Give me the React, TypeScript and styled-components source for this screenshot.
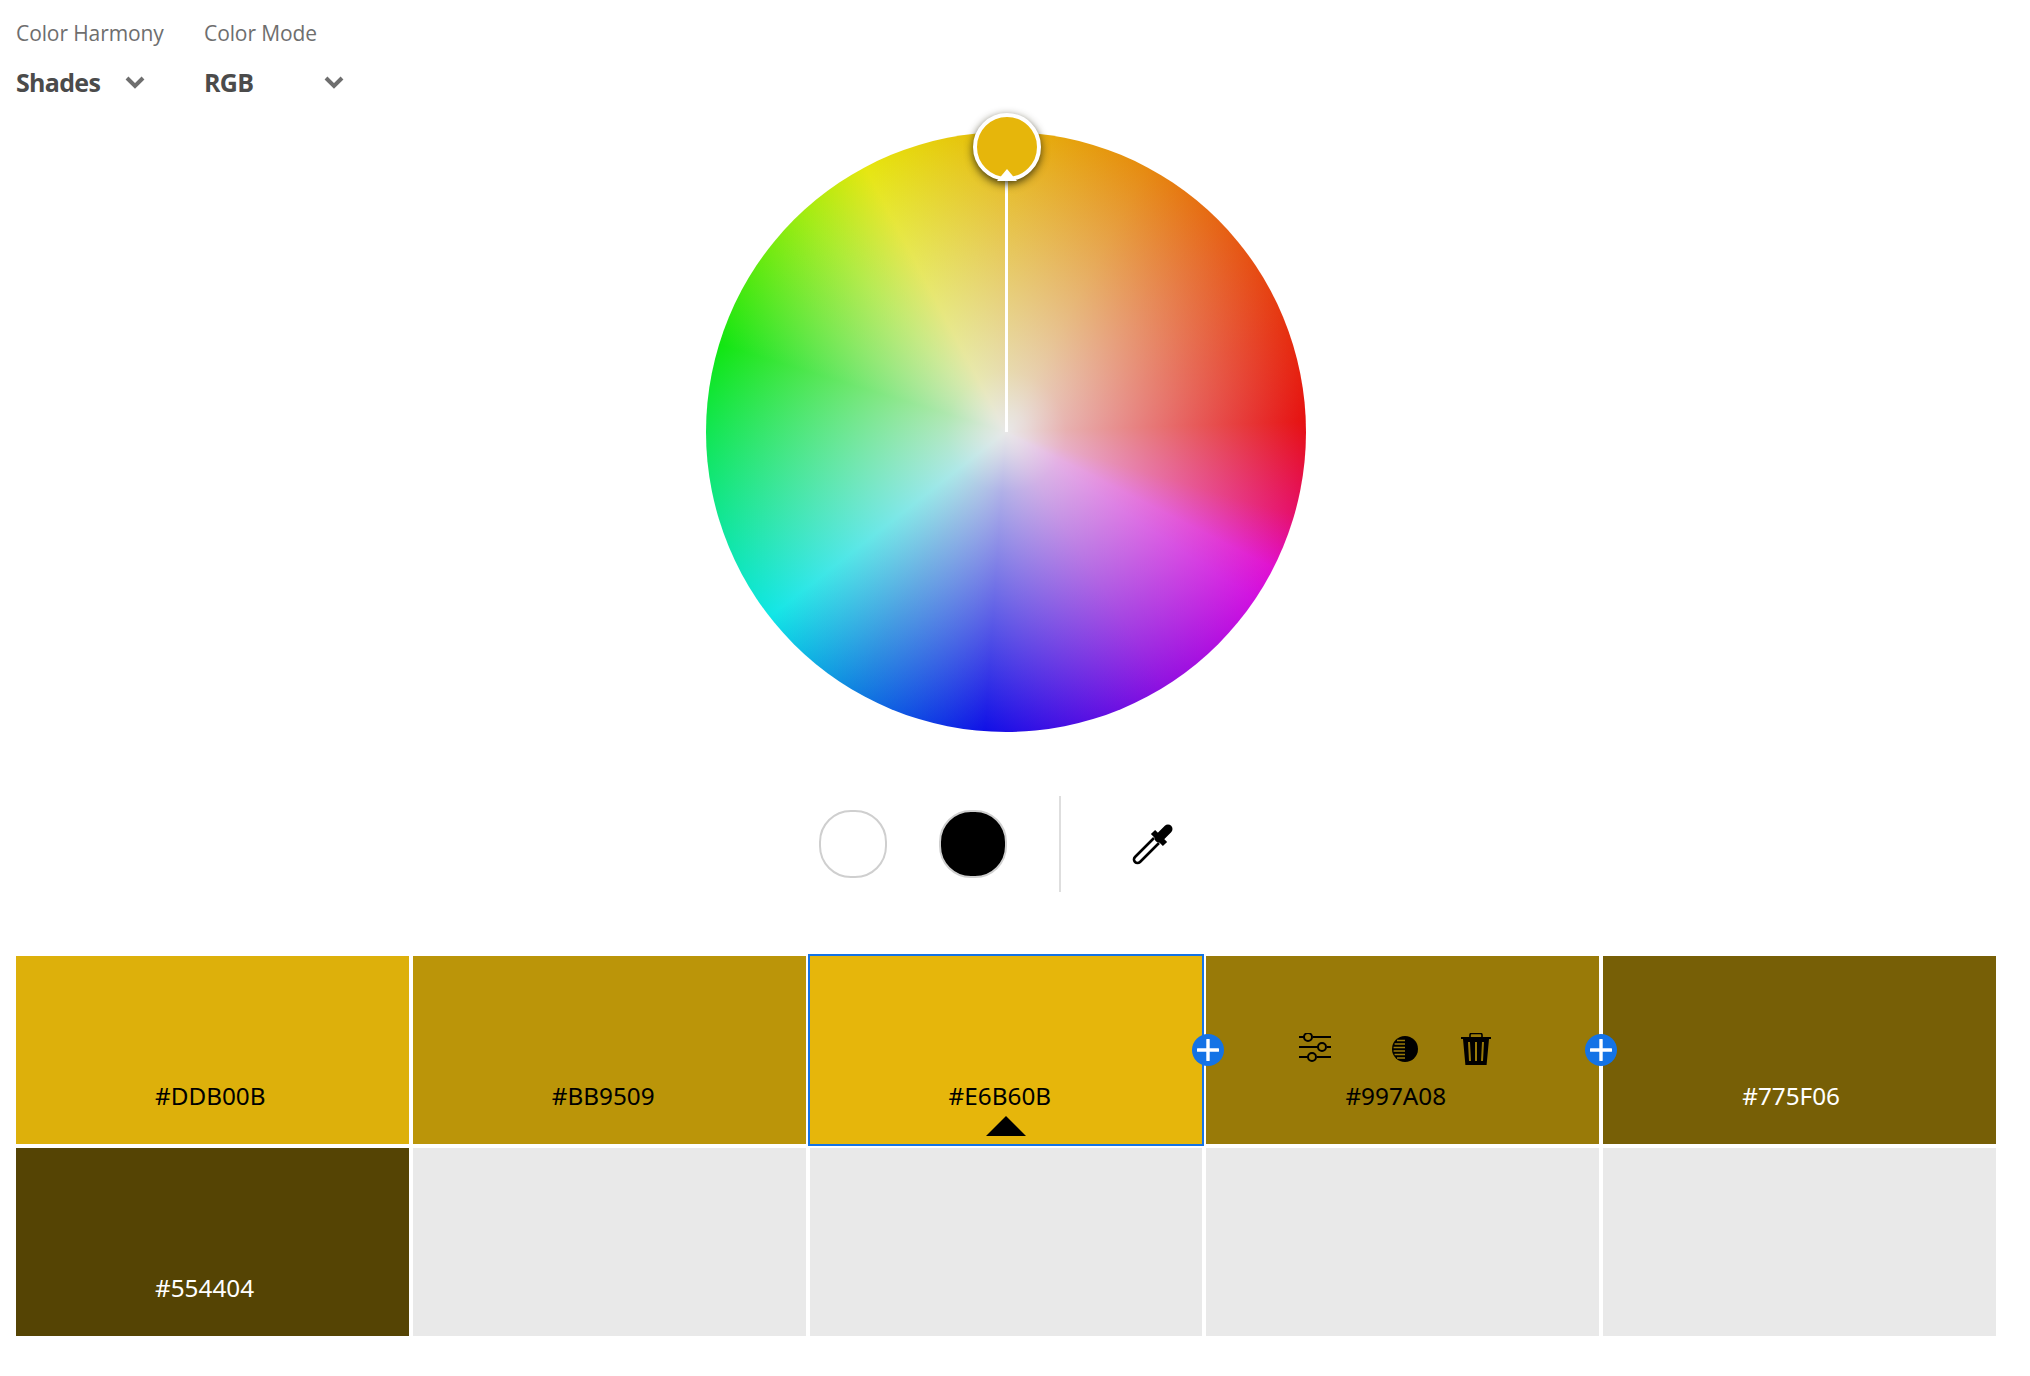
import React from 'react'
import styled, { createGlobalStyle } from 'styled-components'

const GlobalStyle = createGlobalStyle`
  html, body {
    margin: 0;
    padding: 0;
    background: #fff;
    font-family: "Open Sans", "Noto Sans", sans-serif;
  }
`

const Page = styled.div`
  width: 2030px;
  height: 1376px;
  box-sizing: border-box;
  padding: 0 34px 0 16px;
  overflow: hidden;
`

const Header = styled.div`
  display: flex;
  gap: 39px;
  height: 132px;
  padding-top: 18px;
  box-sizing: border-box;
`

const Field = styled.div<{ $width: number }>`
  width: ${({ $width }) => $width}px;
`

const FieldLabel = styled.div`
  font-size: 21px;
  line-height: 30px;
  color: #6e6e6e;
  letter-spacing: -0.1px;
`

const FieldValue = styled.div<{ $width: number }>`
  display: flex;
  justify-content: space-between;
  align-items: center;
  width: ${({ $width }) => $width}px;
  margin-top: 19px;
  font-size: 25px;
  line-height: 30px;
  font-weight: 700;
  color: #4b4b4b;
  letter-spacing: -0.7px;
`

const Chevron = styled.svg`
  width: 20px;
  height: 14px;
  fill: none;
  stroke: #6e6e6e;
  stroke-width: 4;
`

const WheelArea = styled.div`
  display: flex;
  justify-content: center;
`

const Wheel = styled.div`
  position: relative;
  width: 600px;
  height: 600px;
  border-radius: 50%;
  background:
    radial-gradient(circle closest-side, rgba(232, 232, 232, 1) 0%, rgba(232, 232, 232, 0.92) 7%, rgba(232, 232, 232, 0.74) 20%, rgba(232, 232, 232, 0.42) 55%, rgba(232, 232, 232, 0) 100%),
    conic-gradient(
      #e6b60b 0deg,
      #e68a10 28deg,
      #e65c14 49deg,
      #e63010 70deg,
      #e61010 88deg,
      #e6106a 106deg,
      #e010d0 117deg,
      #d010e0 124deg,
      #9010e0 148deg,
      #1010e6 184deg,
      #1080e0 210deg,
      #10e6e6 232deg,
      #10e690 254deg,
      #10e610 287deg,
      #a0ec10 317deg,
      #e6e610 332deg,
      #e6b60b 360deg
    );
`

const Needle = styled.div`
  position: absolute;
  left: 299px;
  top: 36px;
  width: 3px;
  height: 264px;
  background: #fff;
`

const Handle = styled.div`
  position: absolute;
  left: 267px;
  top: -19px;
  width: 68px;
  height: 68px;
  box-sizing: border-box;
  border: 4px solid #fff;
  border-radius: 50%;
  background: #e6b60b;
  box-shadow: 0 3px 9px rgba(40, 36, 10, 0.85);
`

const HandleNotch = styled.div`
  position: absolute;
  left: 20px;
  bottom: -4px;
  width: 0;
  height: 0;
  border-left: 10px solid transparent;
  border-right: 10px solid transparent;
  border-bottom: 12px solid #fff;
`

const Tools = styled.div`
  display: flex;
  align-items: center;
  justify-content: center;
  height: 96px;
  margin-top: 64px;
`

const Swatch = styled.div<{ $color: string }>`
  width: 68px;
  height: 68px;
  box-sizing: border-box;
  border: 2px solid #cfcfcf;
  border-radius: 47%;
  background: ${({ $color }) => $color};
`

const SwatchGap = styled.div`
  width: 52px;
`

const Divider = styled.div`
  width: 2px;
  height: 96px;
  margin-left: 52px;
  background: #dedede;
`

const PickerButton = styled.div`
  display: flex;
  align-items: center;
  justify-content: center;
  width: 82px;
  height: 96px;
  margin-left: 51px;
`

const Grid = styled.div`
  display: grid;
  grid-template-columns: repeat(5, 1fr);
  grid-auto-rows: 188px;
  gap: 4px;
  margin-top: 64px;
`

const Cell = styled.div<{ $color: string; $light?: boolean; $active?: boolean }>`
  position: relative;
  display: flex;
  align-items: flex-end;
  box-sizing: border-box;
  padding: 0 0 32px 139px;
  background: ${({ $color }) => $color};
  color: ${({ $light }) => ($light ? '#fff' : '#000')};
  ${({ $active }) => $active && 'outline: 2px solid #1473e6; z-index: 1;'}
`

const Hex = styled.span`
  font-family: "Noto Sans", "Open Sans", sans-serif;
  font-size: 24.3px;
  line-height: 32px;
`

const Marker = styled.div`
  position: absolute;
  left: 176px;
  bottom: 8px;
  width: 0;
  height: 0;
  border-left: 20px solid transparent;
  border-right: 20px solid transparent;
  border-bottom: 20px solid #000;
`

const CellTools = styled.div`
  position: absolute;
  left: 93px;
  top: 77px;
  display: flex;
  align-items: center;
`

const IconSlot = styled.span<{ $offset?: number }>`
  display: flex;
  justify-content: center;
  align-items: center;
  height: 32px;
  margin-left: ${({ $offset }) => $offset ?? 0}px;
`

const AddButton = styled.div<{ $side: 'left' | 'right' }>`
  position: absolute;
  top: 78px;
  ${({ $side }) => ($side === 'left' ? 'left: -14px;' : 'right: -18px;')}
  width: 32px;
  height: 32px;
  border-radius: 50%;
  background: #1473e6;
  z-index: 2;
  display: flex;
  align-items: center;
  justify-content: center;
`

const swatches = [
  { color: '#DDB00B', hex: '#DDB00B' },
  { color: '#BB9509', hex: '#BB9509' },
  { color: '#E6B60B', hex: '#E6B60B', active: true },
  { color: '#997A08', hex: '#997A08', tools: true },
  { color: '#775F06', hex: '#775F06', light: true },
  { color: '#554404', hex: '#554404', light: true },
  { color: '#E9E9E9' },
  { color: '#E9E9E9' },
  { color: '#E9E9E9' },
  { color: '#E9E9E9' },
]

const ChevronIcon = () => (
  <Chevron viewBox="0 0 20 14">
    <path d="M2 3l8 8 8-8" />
  </Chevron>
)

const PlusIcon = () => (
  <svg width="22" height="22" viewBox="0 0 22 22">
    <path d="M11 1v20M1 11h20" stroke="#fff" strokeWidth="3.4" strokeLinecap="round" />
  </svg>
)

const Eyedropper = () => (
  <svg width="42" height="42" viewBox="0 0 42 42" fill="none" stroke="#000">
    <path d="M22 15L3 34a3.4 3.4 0 0 0 5 5L27 20" strokeWidth="2.6" />
    <path d="M21 9L33 21" strokeWidth="6" />
    <path d="M27 15L36 6" strokeWidth="9" strokeLinecap="round" />
  </svg>
)

const SlidersIcon = () => (
  <svg width="32" height="32" viewBox="0 0 32 32" fill="none" stroke="#000" strokeWidth="2">
    <path d="M0 4h5M14 4h18M0 14h19M28 14h4M0 24h9M18 24h14" />
    <circle cx="9" cy="4" r="4" />
    <circle cx="23" cy="14" r="4" />
    <circle cx="13" cy="24" r="4" />
  </svg>
)

const ContrastIcon = () => (
  <svg width="26" height="26" viewBox="0 0 26 26">
    <circle cx="13" cy="13" r="13" fill="#000" />
    <path d="M5 4.5h8M2.6 8h10.4M1.6 11.5h11.4M1.6 15h11.4M2.6 18.5h10.4M5 22h8" stroke="#997A08" strokeWidth="1.6" />
  </svg>
)

const TrashIcon = () => (
  <svg width="30" height="32" viewBox="0 0 30 32">
    <path d="M9 4V2a1.5 1.5 0 0 1 1.5-1.5h9A1.5 1.5 0 0 1 21 2v2" fill="none" stroke="#000" strokeWidth="1.6" />
    <path d="M0 4h30v2h-2l-2.4 26H4.4L2 6H0z" fill="#000" />
    <path d="M8 9l1 19M15 9v19M22 9l-1 19" stroke="#997A08" strokeWidth="2" />
  </svg>
)

export default function App() {
  return (
    <Page>
      <GlobalStyle />
      <Header>
        <Field $width={149}>
          <FieldLabel>Color Harmony</FieldLabel>
          <FieldValue $width={129}>
            Shades
            <ChevronIcon />
          </FieldValue>
        </Field>
        <Field $width={140}>
          <FieldLabel>Color Mode</FieldLabel>
          <FieldValue $width={140}>
            RGB
            <ChevronIcon />
          </FieldValue>
        </Field>
      </Header>
      <WheelArea>
        <Wheel>
          <Needle />
          <Handle>
            <HandleNotch />
          </Handle>
        </Wheel>
      </WheelArea>
      <Tools>
        <Swatch $color="#fff" />
        <SwatchGap />
        <Swatch $color="#000" />
        <Divider />
        <PickerButton>
          <Eyedropper />
        </PickerButton>
      </Tools>
      <Grid>
        {swatches.map((s, i) => (
          <Cell key={i} $color={s.color} $light={s.light} $active={s.active}>
            {s.hex && <Hex>{s.hex}</Hex>}
            {s.active && <Marker />}
            {s.tools && (
              <>
                <AddButton $side="left">
                  <PlusIcon />
                </AddButton>
                <CellTools>
                  <IconSlot>
                    <SlidersIcon />
                  </IconSlot>
                  <IconSlot $offset={61}>
                    <ContrastIcon />
                  </IconSlot>
                  <IconSlot $offset={43}>
                    <TrashIcon />
                  </IconSlot>
                </CellTools>
                <AddButton $side="right">
                  <PlusIcon />
                </AddButton>
              </>
            )}
          </Cell>
        ))}
      </Grid>
    </Page>
  )
}
